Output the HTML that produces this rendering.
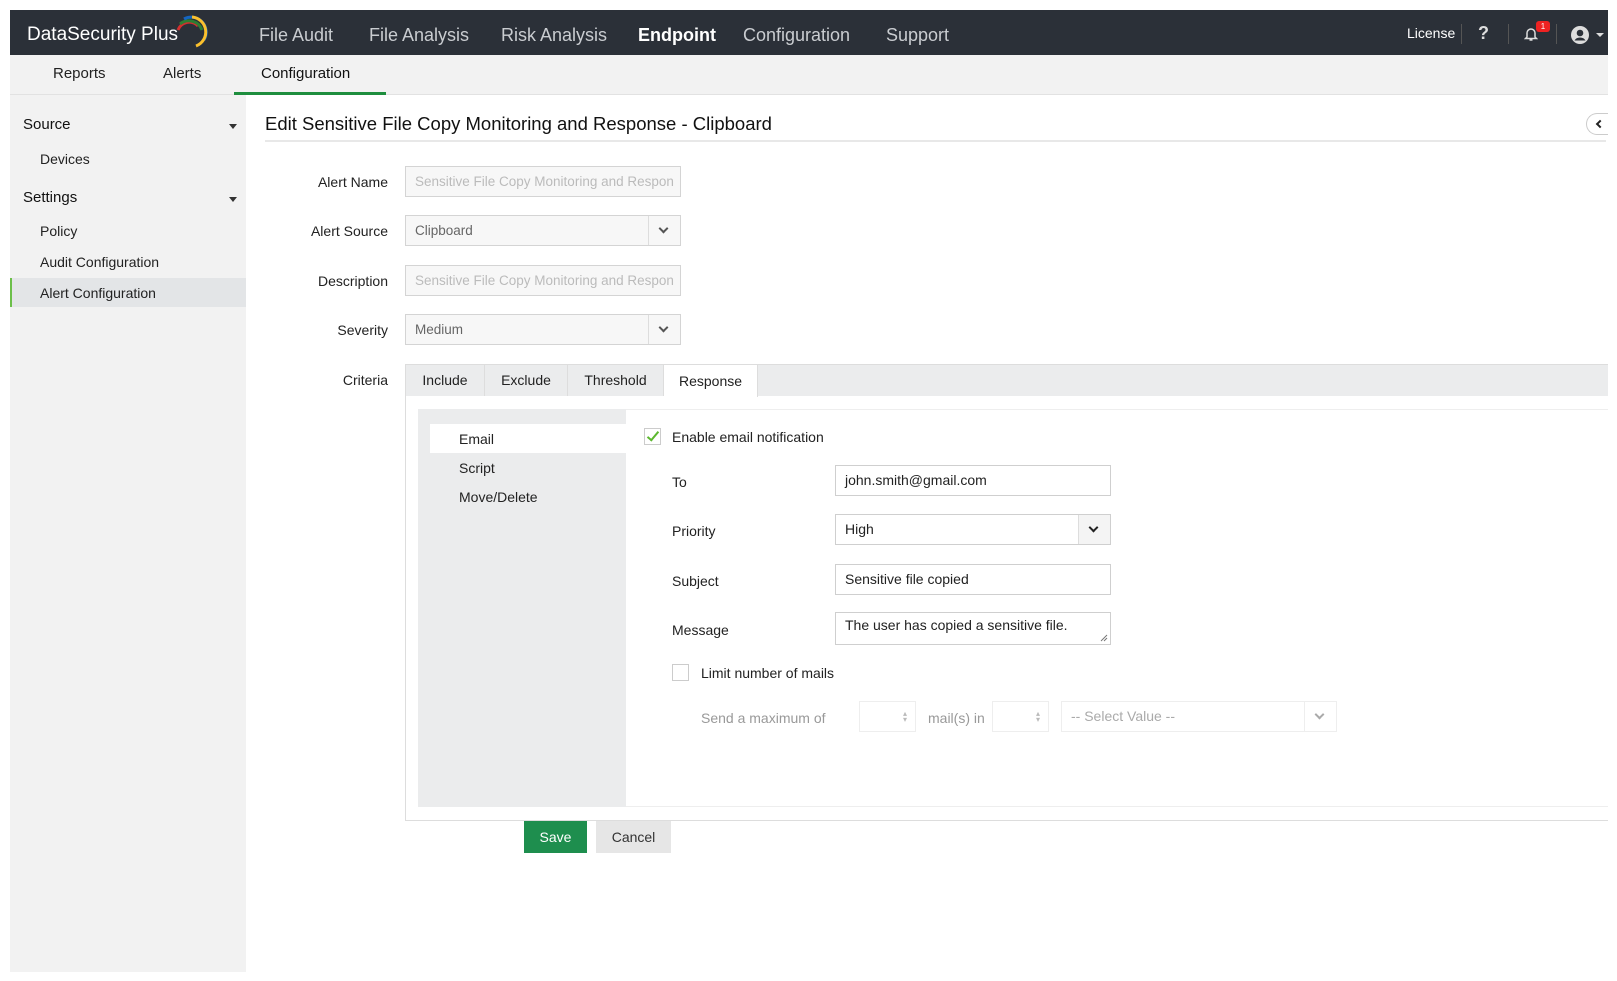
<!DOCTYPE html>
<html><head><meta charset="utf-8"><style>
*{box-sizing:border-box;margin:0;padding:0}
body{width:1617px;height:981px;background:#fff;font-family:"Liberation Sans",sans-serif;color:#222;position:relative;overflow:hidden;font-size:14px}
.a{position:absolute;white-space:nowrap}
.hdr{left:10px;top:10px;width:1598px;height:45px;background:#2b3038}
.nav{top:25px;font-size:18px;color:#c9ccd0}
.sub{left:10px;top:55px;width:1598px;height:40px;background:#f2f2f2;border-bottom:1px solid #e2e2e2}
.side{left:10px;top:95px;width:236px;height:877px;background:#f2f2f2}
.lbl{font-size:14px;color:#222;text-align:right;width:200px;left:188px}
.inp{left:405px;width:276px;height:31px;border:1px solid #d4d4d4;background:#f7f7f7;color:#bbb;padding:0 9px;line-height:29px;font-size:13.5px;overflow:hidden}
.dd{position:absolute;right:0;top:0;width:32px;height:29px;border-left:1px solid #ddd}
.chev{position:absolute;left:11px;top:9px;width:7px;height:7px;border-right:2px solid #555;border-bottom:2px solid #555;transform:rotate(45deg)}
.tab{top:364px;height:32px;line-height:32px;text-align:center;border-right:1px solid #ddd;font-size:14px}
.fi{left:835px;width:276px;height:31px;border:1px solid #cfcfcf;background:#fff;padding:0 9px;line-height:29px;font-size:14px}
.fl{left:672px;font-size:14px}
.spin{position:absolute;right:8px;top:9px;color:#bbb;font-size:8px;line-height:6px}
</style></head><body>
<div class="a hdr"></div>
<div class="a" style="left:27px;top:24px;font-size:19px;color:#fff">DataSecurity Plus</div>
<svg class="a" style="left:170px;top:14px" width="38" height="36" viewBox="0 0 38 36"><path d="M8 16 A12 12 0 0 1 28 12" stroke="#d32f2f" stroke-width="3" fill="none"/><path d="M10 10 A14 14 0 0 1 32 16" stroke="#2e7d32" stroke-width="3" fill="none"/><path d="M14 5 A15 15 0 0 1 34 26" stroke="#1565c0" stroke-width="3" fill="none"/><path d="M22 3 A15 15 0 0 1 26 32" stroke="#fbc02d" stroke-width="3" fill="none"/></svg>
<div class="a nav" style="left:259px">File Audit</div>
<div class="a nav" style="left:369px">File Analysis</div>
<div class="a nav" style="left:501px">Risk Analysis</div>
<div class="a nav" style="left:638px;color:#fff;font-weight:bold">Endpoint</div>
<div class="a nav" style="left:743px">Configuration</div>
<div class="a nav" style="left:886px">Support</div>
<div class="a" style="left:1407px;top:25px;color:#fff;font-size:14px">License</div>
<div class="a" style="left:1461px;top:24px;width:1px;height:20px;background:#555"></div>
<div class="a" style="left:1478px;top:23px;color:#ddd;font-size:18px;font-weight:bold">?</div>
<div class="a" style="left:1508px;top:24px;width:1px;height:20px;background:#555"></div>
<svg class="a" style="left:1524px;top:26px" width="14" height="16" viewBox="0 0 14 16"><path d="M3 11V7a4 4 0 0 1 8 0v4l1.5 1.5h-11z M5.5 14h3" stroke="#ddd" stroke-width="1.5" fill="none"/></svg>
<div class="a" style="left:1536px;top:21px;width:14px;height:11px;background:#e22;border-radius:3px;color:#fff;font-size:8px;text-align:center;line-height:11px">1</div>
<div class="a" style="left:1556px;top:24px;width:1px;height:20px;background:#555"></div>
<svg class="a" style="left:1570px;top:25px" width="20" height="20" viewBox="0 0 20 20"><circle cx="10" cy="10" r="9" fill="#ddd"/><circle cx="10" cy="8" r="3.3" fill="#2b3038"/><path d="M4.5 15.5a6 5 0 0 1 11 0" fill="#2b3038"/></svg>
<div class="a" style="left:1596px;top:33px;border:4px solid transparent;border-top:4px solid #ddd"></div>

<div class="a sub"></div>
<div class="a" style="left:53px;top:65px;font-size:15px">Reports</div>
<div class="a" style="left:163px;top:65px;font-size:15px">Alerts</div>
<div class="a" style="left:261px;top:65px;font-size:15px;color:#111">Configuration</div>
<div class="a" style="left:234px;top:92px;width:152px;height:3px;background:#1e8e3e"></div>

<div class="a side"></div>
<div class="a" style="left:23px;top:116px;font-size:15px;color:#111">Source</div>
<div class="a" style="left:229px;top:124px;border:4px solid transparent;border-top:5px solid #333"></div>
<div class="a" style="left:40px;top:151px;font-size:14px">Devices</div>
<div class="a" style="left:23px;top:189px;font-size:15px;color:#111">Settings</div>
<div class="a" style="left:229px;top:197px;border:4px solid transparent;border-top:5px solid #333"></div>
<div class="a" style="left:40px;top:223px;font-size:14px">Policy</div>
<div class="a" style="left:40px;top:254px;font-size:14px">Audit Configuration</div>
<div class="a" style="left:10px;top:278px;width:236px;height:29px;background:#e3e5e7;border-left:2px solid #6cbf4a"></div>
<div class="a" style="left:40px;top:285px;font-size:14px">Alert Configuration</div>

<div class="a" style="left:265px;top:113px;font-size:18.5px;color:#111">Edit Sensitive File Copy Monitoring and Response - Clipboard</div>
<div class="a" style="left:265px;top:140px;width:1341px;height:2px;background:#e8e8e8"></div>
<div class="a" style="left:1586px;top:113px;width:22px;height:22px;border:1px solid #ccc;border-right:none;border-radius:11px 0 0 11px;background:#fff"></div>
<div class="a" style="left:1597px;top:121px;width:6px;height:6px;border-left:2px solid #222;border-bottom:2px solid #222;transform:rotate(45deg)"></div>

<div class="a lbl" style="top:174px">Alert Name</div>
<div class="a inp" style="top:166px">Sensitive File Copy Monitoring and Respon</div>
<div class="a lbl" style="top:223px">Alert Source</div>
<div class="a inp" style="top:215px;color:#666">Clipboard<div class="dd"><div class="chev"></div></div></div>
<div class="a lbl" style="top:273px">Description</div>
<div class="a inp" style="top:265px">Sensitive File Copy Monitoring and Respon</div>
<div class="a lbl" style="top:322px">Severity</div>
<div class="a inp" style="top:314px;color:#666">Medium<div class="dd"><div class="chev"></div></div></div>
<div class="a lbl" style="top:372px">Criteria</div>

<div class="a" style="left:405px;top:364px;width:1203px;height:32px;background:#ebeced;border-top:1px solid #ddd"></div>
<div class="a tab" style="left:405px;width:80px;border-left:1px solid #ddd">Include</div>
<div class="a tab" style="left:485px;width:83px">Exclude</div>
<div class="a tab" style="left:568px;width:96px">Threshold</div>
<div class="a tab" style="left:664px;width:94px;background:#fff;height:33px;border-top:1px solid #ddd">Response</div>
<div class="a" style="left:405px;top:396px;width:1203px;height:425px;border:1px solid #ddd;border-top:none;border-right:none"></div>
<div class="a" style="left:418px;top:409px;width:208px;height:398px;background:#ebeced"></div>
<div class="a" style="left:626px;top:409px;width:982px;height:1px;background:#eee"></div>
<div class="a" style="left:626px;top:806px;width:982px;height:1px;background:#eee"></div>
<div class="a" style="left:430px;top:424px;width:196px;height:29px;background:#fff"></div>
<div class="a" style="left:459px;top:431px">Email</div>
<div class="a" style="left:459px;top:460px">Script</div>
<div class="a" style="left:459px;top:489px">Move/Delete</div>

<div class="a" style="left:644px;top:428px;width:17px;height:17px;border:1px solid #ccc;background:#fff"></div>
<div class="a" style="left:650px;top:429px;width:6px;height:12px;border-right:2px solid #5cb82e;border-bottom:2px solid #5cb82e;transform:rotate(40deg)"></div>
<div class="a" style="left:672px;top:429px">Enable email notification</div>

<div class="a fl" style="top:474px">To</div>
<div class="a fi" style="top:465px">john.smith@gmail.com</div>
<div class="a fl" style="top:523px">Priority</div>
<div class="a fi" style="top:514px">High<div class="dd" style="background:#f4f4f4"><div class="chev" style="border-color:#222"></div></div></div>
<div class="a fl" style="top:573px">Subject</div>
<div class="a fi" style="top:564px">Sensitive file copied</div>
<div class="a fl" style="top:622px">Message</div>
<div class="a fi" style="top:612px;height:33px;line-height:24px">The user has copied a sensitive file.<svg style="position:absolute;right:2px;bottom:2px" width="8" height="8"><path d="M1 7L7 1M4 7L7 4" stroke="#777" stroke-width="1"/></svg></div>

<div class="a" style="left:672px;top:664px;width:17px;height:17px;border:1px solid #ccc;background:#fff"></div>
<div class="a" style="left:701px;top:665px">Limit number of mails</div>
<div class="a" style="left:701px;top:710px;color:#999">Send a maximum of</div>
<div class="a" style="left:859px;top:701px;width:57px;height:31px;border:1px solid #eee"><div class="spin">▴<br>▾</div></div>
<div class="a" style="left:928px;top:710px;color:#999">mail(s) in</div>
<div class="a" style="left:992px;top:701px;width:57px;height:31px;border:1px solid #eee"><div class="spin">▴<br>▾</div></div>
<div class="a" style="left:1061px;top:701px;width:276px;height:31px;border:1px solid #eee;color:#aaa;padding:0 9px;line-height:29px">-- Select Value --<div class="dd" style="border-color:#eee"><div class="chev" style="border-color:#aaa"></div></div></div>

<div class="a" style="left:524px;top:821px;width:63px;height:32px;background:#1e8e4e;color:#fff;text-align:center;line-height:32px">Save</div>
<div class="a" style="left:596px;top:821px;width:75px;height:32px;background:#e6e6e6;color:#333;text-align:center;line-height:32px">Cancel</div>
</body></html>
